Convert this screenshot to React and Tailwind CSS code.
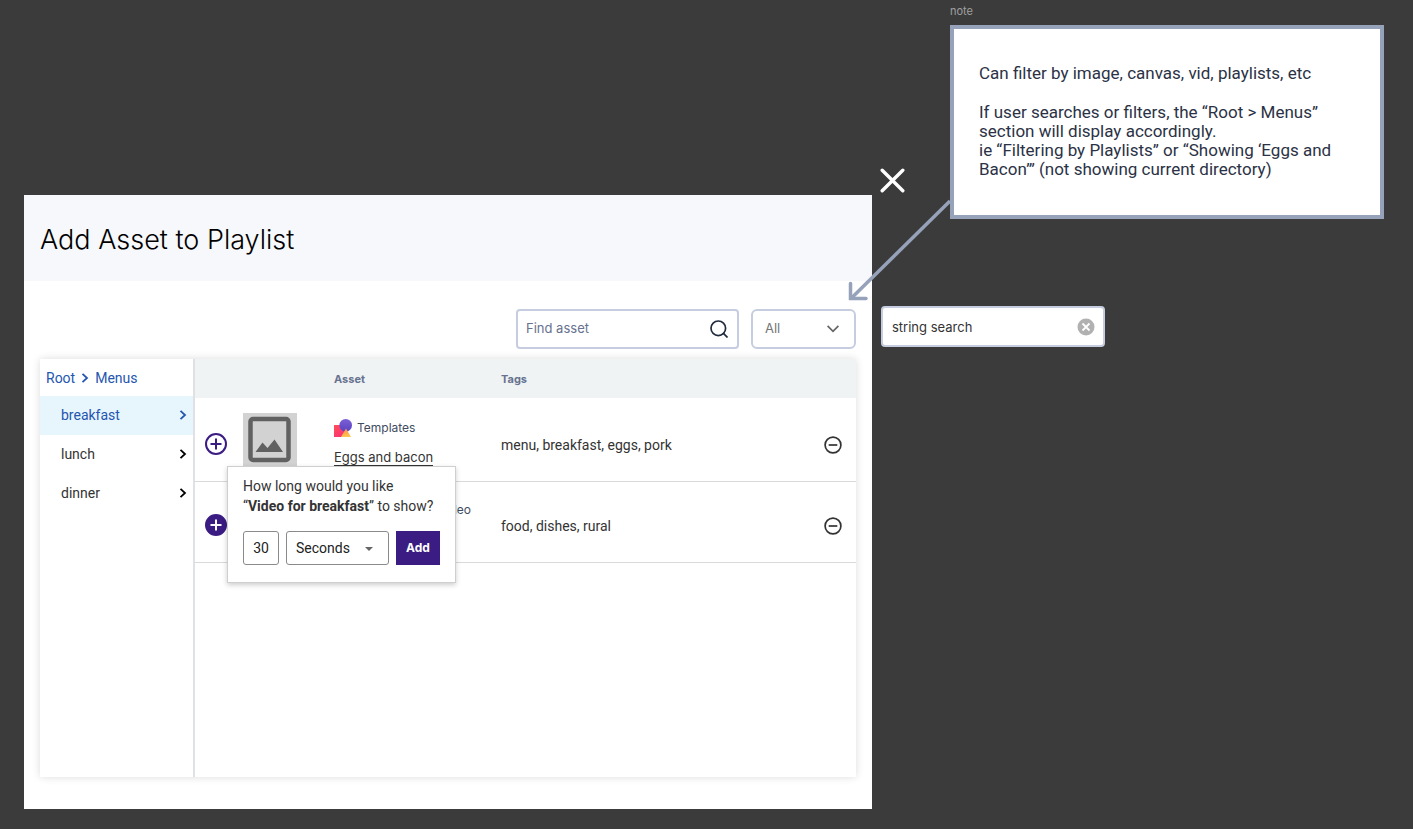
import React, { useState } from "react";

const folders = [
  { name: "breakfast", active: true },
  { name: "lunch", active: false },
  { name: "dinner", active: false },
];

const Chevron = ({ className }) => (
  <svg viewBox="0 0 8 10" className={`w-2 h-[10px] shrink-0 ${className}`} fill="none" stroke="currentColor" strokeWidth="1.8">
    <path d="M1.5 0.8 L6 5 L1.5 9.2" />
  </svg>
);

const AddIcon = ({ filled }) => (
  <svg viewBox="0 0 22 22" className="w-[22px] h-[22px]">
    <circle cx="11" cy="11" r="10" fill={filled ? "#3a1c82" : "#fff"} stroke="#3a1c82" strokeWidth="2" />
    <path d="M11 5.5v11M5.5 11h11" stroke={filled ? "#fff" : "#3a1c82"} strokeWidth="2" />
  </svg>
);

const RemoveIcon = () => (
  <svg viewBox="0 0 18 18" className="w-[18px] h-[18px]" fill="none" stroke="#333" strokeWidth="1.7">
    <circle cx="9" cy="9" r="7.9" />
    <path d="M4.7 9h8.6" />
  </svg>
);

const Thumbnail = () => (
  <svg viewBox="0 0 54 54" className="block w-[54px] h-[54px]">
    <rect width="54" height="54" fill="#d2d2d2" />
    <rect x="7.5" y="6" width="38" height="41" rx="2.5" fill="#d2d2d2" stroke="#616161" strokeWidth="4.5" />
    <path d="M12.5 39 L19.5 29.5 L24.5 35 L31.5 26.5 L40 39 Z" fill="#616161" />
  </svg>
);

const TemplatesIcon = () => (
  <svg viewBox="0 0 18 18" className="w-[18px] h-[18px] shrink-0">
    <defs>
      <linearGradient id="square" x1="0" y1="0" x2="1" y2="1">
        <stop offset="0" stopColor="#ff4f57" />
        <stop offset="1" stopColor="#f92c78" />
      </linearGradient>
      <linearGradient id="circle" x1="0" y1="0" x2="0" y2="1">
        <stop offset="0" stopColor="#7c5fd6" />
        <stop offset="1" stopColor="#5a43c0" />
      </linearGradient>
      <linearGradient id="triangle" x1="0" y1="0" x2="0" y2="1">
        <stop offset="0" stopColor="#ff8a4c" />
        <stop offset="1" stopColor="#ffc94d" />
      </linearGradient>
    </defs>
    <rect x="0" y="6" width="11.5" height="12" fill="url(#square)" />
    <circle cx="11.7" cy="6.3" r="6.3" fill="url(#circle)" />
    <path d="M12 9.5 L17 18 H7 Z" fill="url(#triangle)" />
  </svg>
);

const DurationPopover = () => {
  const [amount, setAmount] = useState("30");

  return (
    <form
      onSubmit={(e) => e.preventDefault()}
      className="absolute left-8 top-[107px] z-10 w-[229px] border border-[#cfcfcf] bg-white px-[15px] pt-[9px] pb-[17px] shadow-[0_2px_5px_rgba(0,0,0,0.2)]"
    >
      <p className="text-sm leading-5 text-[#333]">
        How long would you like
        <br />“<b className="font-bold">Video for breakfast</b>” to show?
      </p>
      <div className="mt-[15px] flex items-center">
        <input
          aria-label="Duration"
          value={amount}
          onChange={(e) => setAmount(e.target.value)}
          className="h-[34px] w-9 rounded-[3px] border border-[#8a8a8a] text-center text-sm text-[#222]"
        />
        <div className="relative ml-[7px] flex-1">
          <select
            aria-label="Unit"
            className="h-[34px] w-full appearance-none rounded-[3px] border border-[#8a8a8a] bg-white pl-[9px] text-sm text-[#222]"
          >
            <option>Seconds</option>
            <option>Minutes</option>
          </select>
          <svg viewBox="0 0 8 4" className="pointer-events-none absolute right-4 top-4 h-1 w-2">
            <path d="M0 0h8L4 4z" fill="#666" />
          </svg>
        </div>
        <button type="submit" className="ml-[7px] h-[34px] w-11 bg-[#3a1c82] font-[Inter,sans-serif] text-xs font-bold text-white">
          Add
        </button>
      </div>
    </form>
  );
};

const FolderNav = () => (
  <nav className="w-[155px] shrink-0 border-r-2 border-[#dfe1e4] text-sm text-[#333]">
    <div className="flex h-[37px] items-center gap-[6px] pl-[6px] text-[#2456b0]">
      <a href="#root">Root</a>
      <Chevron />
      <a href="#menus">Menus</a>
    </div>
    {folders.map((folder) => (
      <a
        key={folder.name}
        href={`#${folder.name}`}
        className={`flex h-[39px] items-center justify-between pb-[2px] pl-[21px] pr-[6px] ${folder.active ? "bg-[#e7f5fc] text-[#2456b0]" : ""}`}
      >
        {folder.name}
        <Chevron className={folder.active ? "" : "text-black"} />
      </a>
    ))}
  </nav>
);

const AssetTable = () => (
  <div className="relative flex-1">
    <table className="w-full table-fixed border-collapse text-left text-sm text-[#333]">
      <colgroup>
        <col className="w-12" />
        <col className="w-[91px]" />
        <col className="w-[167px]" />
        <col />
        <col className="w-[54px]" />
      </colgroup>
      <thead>
        <tr className="h-[39px] bg-[#eff3f4] font-[Inter,sans-serif] text-[11px] text-[#67728f]">
          <th aria-label="Add" />
          <th aria-label="Preview" />
          <th className="pt-[2px] font-bold">Asset</th>
          <th className="pt-[2px] font-bold">Tags</th>
          <th aria-label="Remove" />
        </tr>
      </thead>
      <tbody>
        <tr className="h-[83px] border-b border-[#d9d9d9]">
          <td className="pl-[10px] pt-[10px]">
            <button aria-label="Add Eggs and bacon" className="block"><AddIcon /></button>
          </td>
          <td className="pt-[2px]"><Thumbnail /></td>
          <td className="pt-[7px] font-[Inter,sans-serif]">
            <div className="flex items-center gap-[5px] text-xs text-[#3f4d5f]">
              <TemplatesIcon />
              Templates
            </div>
            <a href="#eggs-and-bacon" className="mt-3 block w-fit border-b border-[#333] text-[13px] leading-4">
              Eggs and bacon
            </a>
          </td>
          <td className="pt-3">menu, breakfast, eggs, pork</td>
          <td className="pt-3 pl-[22px]">
            <button aria-label="Remove Eggs and bacon" className="block"><RemoveIcon /></button>
          </td>
        </tr>
        <tr className="h-[81px] border-b border-[#d9d9d9]">
          <td className="pl-[10px] pt-[6px]">
            <button aria-label="Add Video for breakfast" className="block"><AddIcon filled /></button>
          </td>
          <td />
          <td className="pr-[30px] pb-6 text-right font-[Inter,sans-serif] text-xs text-[#3f4d5f]">Video</td>
          <td className="pt-2">food, dishes, rural</td>
          <td className="pt-2 pl-[22px]">
            <button aria-label="Remove Video for breakfast" className="block"><RemoveIcon /></button>
          </td>
        </tr>
      </tbody>
    </table>
    <DurationPopover />
  </div>
);

const AddAssetDialog = () => (
  <section aria-label="Add Asset to Playlist" className="mt-[195px] mb-5 ml-6 flex min-w-0 flex-1 flex-col bg-white">
    <header className="flex h-[86px] items-center bg-[#f7f8fc] px-4">
      <h1 className="pt-1 font-[Inter,sans-serif] text-[27px] font-light text-black">Add Asset to Playlist</h1>
    </header>
    <div className="mt-7 flex justify-end gap-3 px-4 font-[Inter,sans-serif] text-[13px]">
      <div className="flex h-10 w-[223px] items-center rounded border-2 border-[#c6cde0] pl-2 pr-[9px]">
        <input aria-label="Find asset" placeholder="Find asset" className="min-w-0 flex-1 outline-none placeholder:text-[#67728f]" />
        <svg viewBox="0 0 18 18" className="h-[18px] w-[18px]" fill="none" stroke="#1f2a3d" strokeWidth="1.7">
          <circle cx="8.3" cy="8.3" r="7.3" />
          <path d="M13.2 13.2 L17.5 17.5" />
        </svg>
      </div>
      <div className="relative">
        <select aria-label="Asset type" className="h-10 w-[105px] appearance-none rounded-md border-2 border-[#c6cde0] bg-white pl-3 text-[#757575]">
          <option>All</option>
          <option>Image</option>
          <option>Canvas</option>
          <option>Playlists</option>
        </select>
        <svg viewBox="0 0 12 8" className="pointer-events-none absolute right-[17px] top-4 h-2 w-3" fill="none" stroke="#666" strokeWidth="1.7">
          <path d="M0.6 0.8 L6 6.3 L11.4 0.8" />
        </svg>
      </div>
    </div>
    <div className="mx-4 mt-[10px] mb-8 flex flex-1 bg-white shadow-[0_0_8px_rgba(0,0,0,0.14)]">
      <FolderNav />
      <AssetTable />
    </div>
  </section>
);

const Note = () => (
  <div className="mr-[29px] flex-1">
    <div className="h-[25px] pt-1 font-[Inter,sans-serif] text-[11px] leading-[15px] text-[#a0a0a0]">note</div>
    <div className="flex h-[194px] flex-col gap-5 border-4 border-[#96a1ba] bg-white px-[25px] pt-[35px] text-[17px] leading-[19px] text-[#2b3245]">
      <p>Can filter by image, canvas, vid, playlists, etc</p>
      <p>
        If user searches or filters, the “Root &gt; Menus”
        <br />
        section will display accordingly.
        <br />
        ie “Filtering by Playlists” or “Showing ‘Eggs and
        <br />
        Bacon’” (not showing current directory)
      </p>
    </div>
  </div>
);

const App = () => {
  const [query, setQuery] = useState("string search");

  return (
    <div className="flex min-h-screen bg-[#3b3b3b] font-[Roboto,sans-serif]">
      <AddAssetDialog />
      <aside className="relative w-[541px] shrink-0">
        <div className="flex">
          <div className="w-[78px] pl-2 pt-[168px]">
            <button aria-label="Close" className="block">
              <svg viewBox="0 0 25 25" className="h-[25px] w-[25px]" stroke="#fff" strokeWidth="3.4" strokeLinecap="round">
                <path d="M2.2 2.2 L22.8 22.8 M22.8 2.2 L2.2 22.8" />
              </svg>
            </button>
          </div>
          <Note />
        </div>
        <div className="mt-[87px] ml-[9px] flex h-[41px] w-[224px] items-center rounded border-2 border-[#c6cde0] bg-white px-2 font-[Inter,sans-serif] text-[13px]">
          <input
            aria-label="Search"
            value={query}
            onChange={(e) => setQuery(e.target.value)}
            className="min-w-0 flex-1 pl-px pt-[2px] text-[#333] outline-none"
          />
          <button aria-label="Clear search" onClick={() => setQuery("")}>
            <svg viewBox="0 0 18 18" className="block h-[18px] w-[18px]">
              <circle cx="9" cy="9" r="8.5" fill="#b1b1b1" />
              <path d="M5.5 5.5l7 7M12.5 5.5l-7 7" stroke="#fff" strokeWidth="1.8" />
            </svg>
          </button>
        </div>
        {/* Arrow from the note to the type filter */}
        <svg viewBox="0 0 104 104" className="pointer-events-none absolute -left-6 top-[199px] h-[104px] w-[104px]" fill="none" stroke="#96a1ba" strokeWidth="3.5">
          <path d="M102 2 L3 99.5" />
          <path d="M2.5 84.5 V99.5 H18" strokeLinecap="round" />
        </svg>
      </aside>
    </div>
  );
};

export default App;
